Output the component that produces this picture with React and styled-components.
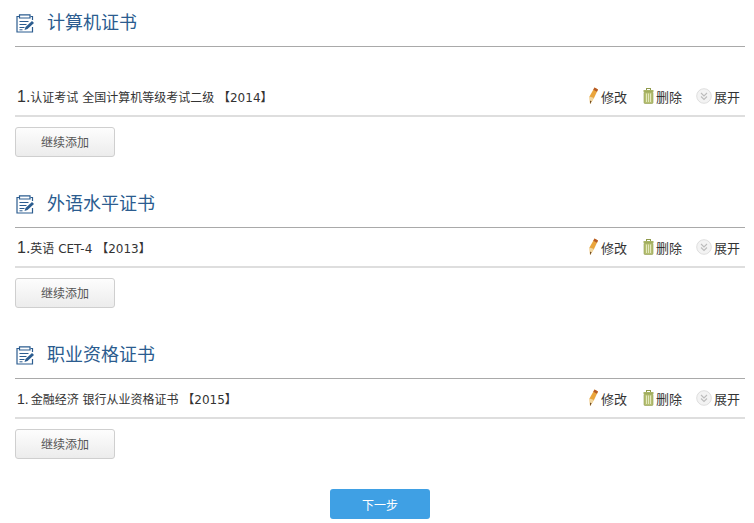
import React from 'react';
import styled, { createGlobalStyle } from 'styled-components';

const GlobalStyle = createGlobalStyle`
  html, body {
    margin: 0;
    padding: 0;
    background: #fff;
    font-family: "Liberation Sans", "Noto Sans CJK SC", sans-serif;
  }
`;

const Page = styled.div`
  width: 730px;
  height: 523px;
  padding: 0 9px 0 15px;
  overflow: hidden;
`;

const Section = styled.section`
  margin-bottom: 24px;
`;

const SectionHeader = styled.div`
  height: 46px;
  display: flex;
  align-items: center;
  border-bottom: 1px solid #a9a9a9;
  padding-left: 1px;
`;

const SectionTitle = styled.h2`
  margin: 0 0 0 13px;
  font-size: 18px;
  font-weight: 400;
  color: #2b5c8f;
  line-height: 46px;
`;

const ItemList = styled.div`
  padding-top: ${p => (p.$spaced ? '30px' : '0')};
`;

const Row = styled.div`
  height: 38px;
  display: flex;
  align-items: center;
  justify-content: space-between;
  border-bottom: 2px solid #dedede;
  padding-right: 5px;
`;

const RowText = styled.div`
  font: 12px "DejaVu Sans", "Noto Sans CJK SC", sans-serif;
  color: #333;
  padding: 1px 0 0 2px;
  white-space: pre;
`;

const Num = styled.span`
  font: ${p => (p.$big ? '16px' : '14px')} "Liberation Sans", sans-serif;
  margin-right: ${p => (p.$big ? '0' : '2px')};
`;

const Actions = styled.div`
  display: flex;
  align-items: center;
`;

const Action = styled.span`
  display: flex;
  align-items: center;
  gap: ${p => p.$iconGap}px;
  font-size: 13px;
  color: #333;
  margin-left: ${p => p.$gap || 0}px;
`;

const AddButton = styled.button`
  display: block;
  width: 100px;
  height: 30px;
  margin-top: 10px;
  padding: 0 0 2px;
  box-sizing: border-box;
  border: 1px solid #cfcfcf;
  border-radius: 3px;
  background: linear-gradient(#fdfdfd, #ececec);
  font: 12px "Liberation Sans", "Noto Sans CJK SC", sans-serif;
  color: #555;
`;

const Footer = styled.div`
  display: flex;
  justify-content: center;
  margin-top: 30px;
`;

const NextButton = styled.button`
  width: 100px;
  height: 30px;
  padding: 0;
  border: 0;
  border-radius: 3px;
  background: #3fa0e4;
  font: 12px "Liberation Sans", "Noto Sans CJK SC", sans-serif;
  color: #fff;
`;

const NoteIcon = () => (
  <svg width="18" height="19" viewBox="0 0 18 19" fill="none" stroke="#2b5c8f" strokeWidth="1.2">
    <path d="M14.500 2.500H16.500V6M16.500 13V18H1V2.500H3" />
    <path d="M3.500 .8h10.500v3.200h-10.500z" />
    <path d="M3.500 7.500h9M3.500 10.500h7M3.500 13.500h5M3.500 15.800h3" strokeWidth="1" />
    <path d="M8.500 16l1-3 6.500-6 2 2-6.500 6z" fill="#2b5c8f" stroke="none" />
  </svg>
);

const PencilIcon = () => (
  <svg width="9" height="18" viewBox="0 0 9 18">
    <path d="M1 17L.5 9.500 5.500 .5 9 2.500 5 11z" fill="#eaa53c" />
    <path d="M5.500 .5L9 2.500 8 4.800 4.300 2.700z" fill="#b55a28" />
    <path d="M.5 9.500L5 11 1 17z" fill="#f2d8a2" />
    <path d="M1 13.500L2.600 14.400 1 17z" fill="#6f4a22" />
  </svg>
);

const TrashIcon = () => (
  <svg width="11" height="16" viewBox="0 0 11 16">
    <rect x="3.500" y="0.500" width="4" height="2" fill="none" stroke="#8f9a4c" />
    <rect x="0.500" y="2" width="10" height="2" fill="#a9b566" />
    <rect x="1" y="4" width="9" height="11.500" rx="1" fill="#b5bf72" stroke="#8f9a4c" strokeWidth="0.6" />
    <path d="M3.500 5.500v8.500M5.500 5.500v8.500M7.500 5.500v8.500" stroke="#e4e8bd" strokeWidth="1" />
  </svg>
);

const ExpandIcon = () => (
  <svg width="16" height="16" viewBox="0 0 16 16" fill="none">
    <circle cx="8" cy="8" r="7.300" fill="#f3f3f3" stroke="#dedede" />
    <path d="M5 5l3 3 3-3M5 8.500l3 3 3-3" stroke="#bcbcbc" strokeWidth="1.100" />
  </svg>
);

const sections = [
  { title: '计算机证书', spaced: true, big: true, text: '认证考试 全国计算机等级考试二级 【2014】' },
  { title: '外语水平证书', big: true, text: '英语 CET-4 【2013】' },
  { title: '职业资格证书', text: '金融经济 银行从业资格证书 【2015】' },
];

export default function App() {
  return (
    <>
      <GlobalStyle />
      <Page>
        {sections.map(s => (
          <Section key={s.title}>
            <SectionHeader>
              <NoteIcon />
              <SectionTitle>{s.title}</SectionTitle>
            </SectionHeader>
            <ItemList $spaced={s.spaced}>
              <Row>
                <RowText>
                  <Num $big={s.big}>1.</Num>
                  {s.text}
                </RowText>
                <Actions>
                  <Action $iconGap={3}><PencilIcon />修改</Action>
                  <Action $gap={16} $iconGap={2}><TrashIcon />删除</Action>
                  <Action $gap={14} $iconGap={2}><ExpandIcon />展开</Action>
                </Actions>
              </Row>
            </ItemList>
            <AddButton>继续添加</AddButton>
          </Section>
        ))}
        <Footer>
          <NextButton>下一步</NextButton>
        </Footer>
      </Page>
    </>
  );
}
